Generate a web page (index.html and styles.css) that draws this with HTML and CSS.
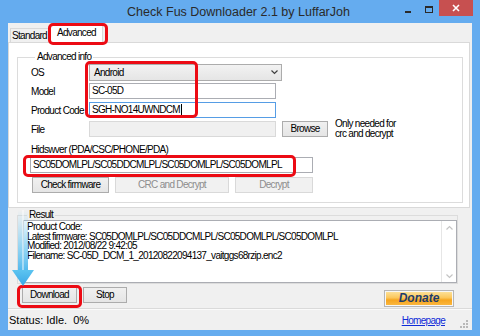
FILE: index.html
```html
<!DOCTYPE html>
<html lang="en">
<head>
    <meta charset="UTF-8">
    <meta name="viewport" content="width=device-width, initial-scale=1.0">
    <title>Check Fus Downloader 2.1 by LuffarJoh</title>
    <link rel="stylesheet" href="styles.css">
</head>
<body>
    <div class="window">
        <div class="titlebar">
            <span></span>
            <span class="title">Check Fus Downloader 2.1 by LuffarJoh</span>
            <div class="caption-buttons">
                <span class="cap-btn cap-min"><i></i></span>
                <span class="cap-btn cap-max"><i></i></span>
                <span class="cap-btn cap-close">
                    <svg width="8" height="8" viewBox="0 0 8 8"><path d="M1 1 L7 7 M7 1 L1 7" stroke="#fff" stroke-width="1.6"/></svg>
                </span>
            </div>
        </div>

        <div class="client">
            <div class="tabstrip">
                <div class="tab">Standard</div>
                <div class="tab tab-active">Advanced</div>
            </div>

            <div class="tabpage">
                <fieldset class="group group-adv">
                    <legend>Advanced info</legend>

                    <div class="row row-os">
                        <label>OS</label>
                        <div class="combo">
                            <span>Android</span>
                            <svg width="7" height="5" viewBox="0 0 7 5"><path d="M0.5 0.5 L3.5 3.5 L6.5 0.5" fill="none" stroke="#404040" stroke-width="1.2"/></svg>
                        </div>
                    </div>
                    <div class="row">
                        <label>Model</label>
                        <div class="textbox">SC-05D</div>
                    </div>
                    <div class="row">
                        <label>Product Code</label>
                        <div class="textbox textbox-focus">SGH-NO14UWNDCM<span class="caret"></span></div>
                    </div>
                    <div class="row row-file">
                        <label>File</label>
                        <div class="textbox textbox-disabled"></div>
                        <button class="btn btn-browse">Browse</button>
                        <div class="note">Only needed for<br>crc and decrypt</div>
                    </div>

                    <div class="hid-label">Hidswver (PDA/CSC/PHONE/PDA)</div>
                    <div class="textbox textbox-hid">SC05DOMLPL/SC05DDCMLPL/SC05DOMLPL/SC05DOMLPL</div>

                    <div class="btn-row">
                        <button class="btn btn-check">Check firmware</button>
                        <button class="btn btn-crc" disabled>CRC and Decrypt</button>
                        <button class="btn btn-decrypt" disabled>Decrypt</button>
                    </div>
                </fieldset>
            </div>

            <fieldset class="group group-result">
                <legend>Result</legend>
                <div class="result-box">
                    <div class="result-text">
                        Product Code:<br>
                        Latest firmware: SC05DOMLPL/SC05DDCMLPL/SC05DOMLPL/SC05DOMLPL<br>
                        Modified: 2012/08/22 9:42:05<br>
                        Filename: SC-05D_DCM_1_20120822094137_vaitggs68rzip.enc2
                    </div>
                    <div class="scrollbar">
                        <svg width="7" height="5" viewBox="0 0 7 5"><path d="M0.5 4.5 L3.5 1.5 L6.5 4.5" fill="none" stroke="#c4c4c4" stroke-width="1.2"/></svg>
                        <svg width="7" height="5" viewBox="0 0 7 5"><path d="M0.5 0.5 L3.5 3.5 L6.5 0.5" fill="none" stroke="#c4c4c4" stroke-width="1.2"/></svg>
                    </div>
                </div>
            </fieldset>

            <div class="action-row">
                <button class="btn btn-download">Download</button>
                <button class="btn btn-stop">Stop</button>
                <button class="donate">Donate</button>
            </div>

            <div class="statusbar">
                <span class="status-text">Status: Idle.&nbsp; 0%</span>
                <a class="homepage" href="#">Homepage</a>
                <svg class="grip" width="9" height="9" viewBox="0 0 9 9">
                    <rect x="7" y="1" width="2" height="2" fill="#b8b8b8"/>
                    <rect x="4" y="4" width="2" height="2" fill="#b8b8b8"/>
                    <rect x="7" y="4" width="2" height="2" fill="#b8b8b8"/>
                    <rect x="1" y="7" width="2" height="2" fill="#b8b8b8"/>
                    <rect x="4" y="7" width="2" height="2" fill="#b8b8b8"/>
                    <rect x="7" y="7" width="2" height="2" fill="#b8b8b8"/>
                </svg>
            </div>
        </div>

        <!-- annotations drawn over the window -->
        <div class="mark mark-tab"></div>
        <div class="mark mark-fields"></div>
        <div class="mark mark-hid"></div>
        <div class="mark mark-download"></div>

        <svg class="arrow" width="26" height="82" viewBox="0 0 26 82">
            <defs>
                <linearGradient id="shaft" x1="0" y1="0" x2="0" y2="1">
                    <stop offset="0" stop-color="#8fd3f5" stop-opacity="0"/>
                    <stop offset="0.6" stop-color="#7ccdf3" stop-opacity="0.8"/>
                    <stop offset="1" stop-color="#4fb6ec"/>
                </linearGradient>
                <linearGradient id="head" x1="0" y1="0" x2="0" y2="1">
                    <stop offset="0" stop-color="#5cc4f0"/>
                    <stop offset="1" stop-color="#3aa6e6"/>
                </linearGradient>
            </defs>
            <rect x="8" y="4" width="10" height="62" fill="url(#shaft)"/>
            <rect x="12" y="4" width="2" height="62" fill="#ffffff" opacity="0.45"/>
            <polygon points="2,64 24,64 13,80" fill="url(#head)"/>
        </svg>
    </div>
</body>
</html>
```

FILE: styles.css
```css
body {
    margin: 0;
    background: #65acef;
}

.window {
    position: relative;
    width: 480px;
    height: 336px;
    box-sizing: border-box;
    padding: 0 8px 6px;
    background: #65acef;
    display: flex;
    flex-direction: column;
    font-family: "Liberation Sans", Arial, sans-serif;
    font-size: 10px;
    letter-spacing: -0.7px;
    color: #000;
}

/* title bar */
.titlebar {
    height: 23px;
    display: grid;
    grid-template-columns: 1fr auto 1fr;
}

.title {
    font-size: 12.5px;
    letter-spacing: 0;
    color: #2a2a2a;
    line-height: 24px;
    margin-left: -3px;
}

.caption-buttons {
    justify-self: end;
    display: flex;
    margin-right: -1px;
}

.cap-btn {
    height: 16px;
    display: flex;
    justify-content: center;
}

.cap-min {
    width: 20px;
}

.cap-min i {
    width: 6px;
    height: 2px;
    margin-top: 11px;
    background: #2a2a2a;
}

.cap-max {
    width: 21px;
}

.cap-max i {
    width: 6px;
    height: 4px;
    margin-top: 6px;
    border: 1px solid #2a2a2a;
    border-top-width: 2px;
}

.cap-close {
    width: 34px;
    background: #c75050;
    align-items: center;
}

/* client area */
.client {
    flex: 1;
    background: #f0f0f0;
    display: flex;
    flex-direction: column;
}

.tabstrip {
    height: 19px;
    display: flex;
    align-items: flex-end;
    padding-left: 2px;
}

.tab {
    height: 13px;
    padding: 0 2px 0 1px;
    border: 1px solid #d9d9d9;
    border-bottom: none;
    background: #f0f0f0;
    line-height: 13px;
}

.tab-active {
    height: 18px;
    margin-bottom: -1px;
    padding: 0 6px;
    background: #fff;
    line-height: 16px;
    position: relative;
}

.tabpage {
    background: #fff;
    border: 1px solid #d9d9d9;
    margin-right: 2px;
}

.group {
    margin: 0;
    border: 1px solid #dcdcdc;
    min-width: 0;
}

.group legend {
    padding: 0 2px;
    margin-left: 4px;
    line-height: 12px;
}

.group-adv {
    margin: 8px 6px 4px 8px;
    padding: 1px 0 9px 13px;
}

.row {
    display: flex;
    align-items: center;
    height: 16px;
    margin-bottom: 3px;
}

.row label {
    width: 58px;
    flex: none;
}

.row-os {
    height: 17px;
    margin-bottom: 2px;
}

.combo {
    width: 184px;
    height: 15px;
    border: 1px solid #acacac;
    background: linear-gradient(#f2f2f2, #e5e5e5);
    display: flex;
    align-items: center;
    justify-content: space-between;
    padding: 0 3px 0 4px;
}

.textbox {
    width: 181px;
    height: 14px;
    border: 1px solid #abadb3;
    background: #fff;
    padding: 0 2px;
    line-height: 14px;
    white-space: nowrap;
}

.textbox-focus {
    border-color: #569de5;
}

.caret {
    display: inline-block;
    width: 1px;
    height: 11px;
    margin-left: 1px;
    background: #000;
    vertical-align: -2px;
}

.textbox-disabled {
    background: #f0f0f0;
    border-color: #d9d9d9;
}

.btn {
    font: inherit;
    letter-spacing: inherit;
    color: #000;
    height: 16px;
    padding: 0;
    border: 1px solid #acacac;
    background: linear-gradient(#f0f0f0, #e5e5e5);
    line-height: 14px;
}

.btn:disabled {
    color: #8d8d8d;
    border-color: #d9d9d9;
    background: #f1f1f1;
}

.btn-browse {
    width: 46px;
    margin-left: 6px;
}

.note {
    margin-left: 7px;
    line-height: 10px;
    align-self: flex-start;
    margin-top: -2px;
}

.hid-label {
    margin-top: 7px;
    line-height: 12px;
}

.textbox-hid {
    width: 277px;
    margin-top: 1px;
    margin-left: -1px;
}

.btn-row {
    display: flex;
    gap: 6px;
    margin-top: 4px;
    margin-left: 1px;
}

.btn-check {
    width: 77px;
}

.btn-crc {
    width: 114px;
}

.btn-decrypt {
    width: 78px;
}

/* result */
.group-result {
    margin: 2px 14px 0 9px;
    padding: 0 0 0 5px;
}

.group-result legend {
    line-height: 10px;
}

.result-box {
    height: 61px;
    border: 1px solid #abadb3;
    background: #fff;
    display: flex;
}

.result-text {
    flex: 1;
    padding: 1px 3px;
    line-height: 9.7px;
}

.scrollbar {
    width: 14px;
    border-left: 1px solid #e6e6e6;
    display: flex;
    flex-direction: column;
    justify-content: space-between;
    align-items: center;
    padding: 4px 0 3px;
}

.action-row {
    display: flex;
    align-items: flex-start;
    gap: 6px;
    padding: 3px 18px 0 14px;
    height: 21px;
    border-bottom: 1px solid #dadada;
}

.btn-download {
    width: 55px;
}

.btn-stop {
    width: 44px;
}

.donate {
    margin-left: auto;
    margin-top: 3px;
    width: 70px;
    height: 17px;
    padding: 0;
    border: 1px solid #b5b5b5;
    box-shadow: inset 0 0 0 1px #f7f7f7;
    background: linear-gradient(#fde4a0 0%, #fbc75c 45%, #f6a51e 60%, #fbba45 100%);
    font-family: "Liberation Sans", Arial, sans-serif;
    font-size: 12px;
    font-weight: bold;
    font-style: italic;
    letter-spacing: 0;
    color: #1e3c6b;
    line-height: 15px;
}

.statusbar {
    flex: 1;
    display: flex;
    align-items: center;
    padding: 0 4px 0 1px;
    border-top: 1px solid #fafafa;
}

.status-text {
    font-size: 11px;
    letter-spacing: 0;
}

.homepage {
    margin-left: auto;
    margin-right: 14px;
    color: #0f2bd8;
}

.grip {
    align-self: flex-end;
    margin-bottom: 2px;
}

/* red annotation frames */
.mark {
    position: absolute;
    border: 3px solid #ec0b14;
    border-radius: 5px;
    box-sizing: border-box;
}

.mark-tab {
    left: 48px;
    top: 23px;
    width: 60px;
    height: 22px;
}

.mark-fields {
    left: 85px;
    top: 61px;
    width: 113px;
    height: 57px;
}

.mark-hid {
    left: 23px;
    top: 155px;
    width: 273px;
    height: 22px;
}

.mark-download {
    left: 17px;
    top: 285px;
    width: 65px;
    height: 23px;
}

.arrow {
    position: absolute;
    left: 10px;
    top: 206px;
}
```
